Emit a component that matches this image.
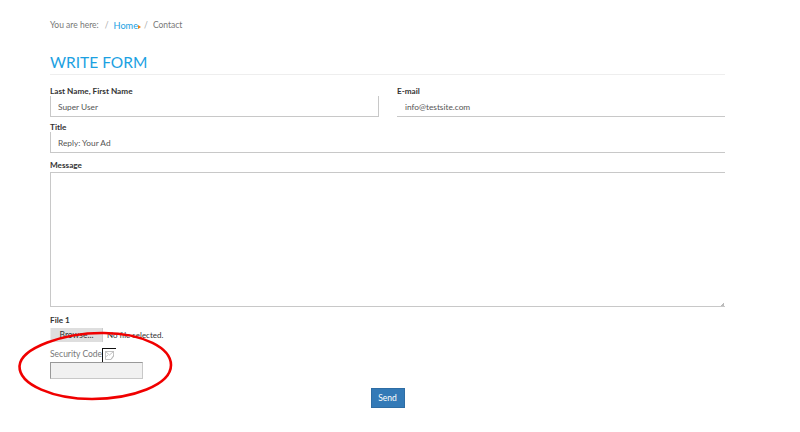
<script>
  const crumbs = ['Home', 'Contact'];
</script>

<div class="page">
  <div class="breadcrumb">
    <span class="here">You are here:</span>
    <span class="sep first">/</span>
    <a href="#home">{crumbs[0]}</a>
    <span class="arrow"></span>
    <span class="sep">/</span>
    <span class="current">{crumbs[1]}</span>
  </div>

  <h2>WRITE FORM</h2>

  <form class="form">
    <div class="row">
      <div class="field">
        <label for="name">Last Name, First Name</label>
        <input id="name" value="Super User" />
      </div>
      <div class="field">
        <label for="email">E-mail</label>
        <input id="email" class="open" value="info@testsite.com" />
      </div>
    </div>

    <div class="title-field">
      <label for="title">Title</label>
      <input id="title" class="open" value="Reply: Your Ad" />
    </div>

    <div class="message-field">
      <label for="message">Message</label>
      <div class="area">
        <span class="grip"></span>
      </div>
    </div>

    <div class="file-field">
      <span class="label">File 1</span>
      <div class="file">
        <span class="browse">Browse...</span>
        <span class="none">No file selected.</span>
      </div>
    </div>

    <div class="security">
      <div class="code-line">
        <span class="code-text">Security Code</span>
        <span class="broken">
          <svg width="9" height="9" viewBox="0 0 9 9" aria-hidden="true">
            <path d="M0.5 0.5h8v5l-2.5 3h-5.5z M0.5 0.5l4 3.5 4-3.5 M0.5 6l2.5-2 M6 8.5l2.5-4" fill="none" stroke="#aaa" stroke-width="0.7" />
          </svg>
        </span>
      </div>
      <div class="code-input"></div>
    </div>

    <div class="actions">
      <button type="button">Send</button>
    </div>
  </form>

  <svg class="circle" width="160" height="74" viewBox="0 0 160 74" aria-hidden="true">
    <path d="M3.5 36 C5 18 48 2.5 88 3 C128 3.5 155 18 155 35 C155 55 116 69 76 69 C38 69 3 55 3.5 36 Z" fill="none" stroke="#f00000" stroke-width="2.6" />
  </svg>
</div>

<style>
  :global(body) {
    margin: 0;
    background: #fff;
  }
  .page {
    position: relative;
    width: 800px;
    height: 432px;
    overflow: hidden;
    box-sizing: border-box;
    padding: 20px 75px 0 50px;
    font-family: Lato, "Liberation Sans", sans-serif;
    font-size: 8.5px;
    color: #555;
  }
  .breadcrumb {
    display: flex;
    align-items: center;
    height: 11px;
    line-height: 11px;
    color: #777;
  }
  .sep {
    color: #aaa;
    margin: 0 5px 0 3px;
  }
  .sep.first {
    margin-left: 6px;
    margin-right: 5px;
  }
  a {
    color: #1ba1e2;
    font-size: 9.2px;
    text-decoration: none;
  }
  .arrow {
    width: 0;
    height: 0;
    border-left: 3px solid #f08010;
    border-top: 2px solid transparent;
    border-bottom: 2px solid transparent;
    margin-top: 2px;
  }
  h2 {
    margin: 19px 0 0;
    height: 24px;
    line-height: 24px;
    font-size: 15.5px;
    font-weight: 400;
    color: #1ba1e2;
    border-bottom: 1px solid #eee;
  }
  .form {
    margin-top: 11px;
  }
  .row {
    display: grid;
    grid-template-columns: 329px 328px;
    column-gap: 18px;
  }
  .field,
  .title-field,
  .message-field,
  .file-field {
    display: flex;
    flex-direction: column;
  }
  label,
  .label {
    height: 10px;
    line-height: 10px;
    font-weight: 700;
    font-size: 8.2px;
    color: #333;
  }
  input {
    box-sizing: border-box;
    width: 100%;
    height: 21px;
    padding: 2px 7px 0;
    border: 0;
    border-left: 1px solid #c8c8c8;
    border-right: 1px solid #c8c8c8;
    border-bottom: 1px solid #c8c8c8;
    outline: none;
    font: 8.3px Lato, "Liberation Sans", sans-serif;
    color: #555;
    background: #fff;
  }
  input.open {
    border-right: 0;
  }
  #email {
    border-left: 0;
    padding-left: 8px;
  }
  .title-field {
    margin-top: 5px;
  }
  .message-field {
    margin-top: 7px;
  }
  .message-field label {
    height: 12px;
  }
  .area {
    position: relative;
    box-sizing: border-box;
    height: 135px;
    border: 1px solid #c8c8c8;
    border-right: 0;
  }
  .grip {
    position: absolute;
    right: 1px;
    bottom: 0;
    width: 6px;
    height: 3px;
    background: linear-gradient(135deg, transparent 60%, #bbb 60%);
  }
  .file-field {
    margin-top: 8px;
  }
  .file {
    display: flex;
    align-items: center;
    height: 14px;
    margin-top: 3px;
  }
  .browse {
    box-sizing: border-box;
    width: 53px;
    height: 14px;
    line-height: 14px;
    text-align: center;
    background: #dedede;
    border-left: 1px solid #eee;
    border-right: 1px solid #ccc;
    color: #333;
  }
  .none {
    margin-left: 4px;
    font-size: 8px;
    color: #333;
  }
  .security {
    margin-top: 6px;
  }
  .code-line {
    display: flex;
    align-items: flex-start;
    height: 14px;
    line-height: 12px;
    color: #777;
  }
  .code-text {
    width: 52px;
    white-space: nowrap;
  }
  .broken {
    box-sizing: border-box;
    width: 14px;
    height: 14px;
    border-top: 1px solid #111;
    border-left: 1px solid #111;
    padding: 2px;
    line-height: 0;
  }
  .code-input {
    box-sizing: border-box;
    width: 93px;
    height: 17px;
    background: #f1f1f1;
    border: 1px solid #c8c8c8;
    border-left-color: #999;
    border-top-color: #999;
  }
  .actions {
    display: flex;
    justify-content: center;
    margin-top: 9px;
  }
  button {
    width: 34px;
    height: 20px;
    padding: 0;
    border: 1px solid #2e6da4;
    background: #337ab7;
    color: #fff;
    font: 8.5px Lato, "Liberation Sans", sans-serif;
  }
  .circle {
    position: absolute;
    left: 16px;
    top: 330px;
  }
</style>
